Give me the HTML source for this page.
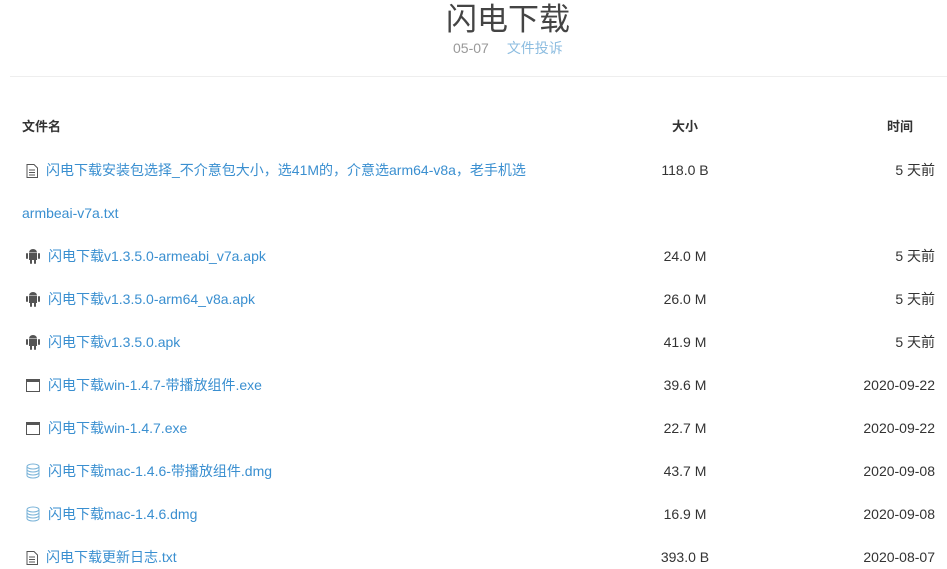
<!DOCTYPE html>
<html><head><meta charset="utf-8"><style>
body{margin:0;width:947px;height:569px;overflow:hidden;background:#fff;font-family:"Liberation Sans","Noto Sans CJK SC",sans-serif;font-size:14px;color:#333;position:relative}
.t{position:absolute;left:0;width:1016px;text-align:center;top:-6px;font-size:31px;color:#444}
.m{position:absolute;top:38px;left:453px;font-size:14px;color:#999}
.m span{color:#8dbde0;margin-left:18px}
.hr{position:absolute;top:76px;left:10px;right:0;border-top:1px solid #eee}
.r{position:absolute;left:0;width:947px;height:20px;line-height:20px}
.n{position:absolute;left:22px;color:#3a8fd0}
.n svg{vertical-align:-3px;margin-right:8px;margin-left:4px}
.s{position:absolute;left:640px;width:90px;text-align:center}
.d{position:absolute;right:12px;text-align:right}
.h{font-weight:bold;color:#333;font-size:13px}
</style></head><body>
<div class="t">闪电下载</div>
<div class="m">05-07<span>文件投诉</span></div>
<div class="hr"></div>
<div class="r h" style="top:117px"><span class="n" style="color:#333">文件名</span><span class="s">大小</span><span class="d" style="right:34px">时间</span></div>
<div class="r" style="top:160px"><span class="n"><svg width="12" height="14" viewBox="0 0 12 14"><path d="M1 .5h7l3.5 3.5v9.5H1z" fill="none" stroke="#555"/><path d="M3 6h6M3 8.5h6M3 11h6" stroke="#555"/></svg>闪电下载安装包选择_不介意包大小，选41M的，介意选arm64-v8a，老手机选</span><span class="s">118.0 B</span><span class="d">5 天前</span></div>
<div class="r" style="top:203px"><span class="n">armbeai-v7a.txt</span></div>
<div class="r" style="top:246px"><span class="n"><svg width="14" height="16" viewBox="0 0 14 16"><rect x="3" y="5" width="8" height="7" fill="#555"/><path d="M3 4.5a4 3.5 0 0 1 8 0z" fill="#555"/><rect x="0" y="5" width="2" height="6" rx="1" fill="#555"/><rect x="12" y="5" width="2" height="6" rx="1" fill="#555"/><rect x="4" y="11" width="2" height="5" rx="1" fill="#555"/><rect x="8" y="11" width="2" height="5" rx="1" fill="#555"/></svg>闪电下载v1.3.5.0-armeabi_v7a.apk</span><span class="s">24.0 M</span><span class="d">5 天前</span></div>
<div class="r" style="top:289px"><span class="n"><svg width="14" height="16" viewBox="0 0 14 16"><rect x="3" y="5" width="8" height="7" fill="#555"/><path d="M3 4.5a4 3.5 0 0 1 8 0z" fill="#555"/><rect x="0" y="5" width="2" height="6" rx="1" fill="#555"/><rect x="12" y="5" width="2" height="6" rx="1" fill="#555"/><rect x="4" y="11" width="2" height="5" rx="1" fill="#555"/><rect x="8" y="11" width="2" height="5" rx="1" fill="#555"/></svg>闪电下载v1.3.5.0-arm64_v8a.apk</span><span class="s">26.0 M</span><span class="d">5 天前</span></div>
<div class="r" style="top:332px"><span class="n"><svg width="14" height="16" viewBox="0 0 14 16"><rect x="3" y="5" width="8" height="7" fill="#555"/><path d="M3 4.5a4 3.5 0 0 1 8 0z" fill="#555"/><rect x="0" y="5" width="2" height="6" rx="1" fill="#555"/><rect x="12" y="5" width="2" height="6" rx="1" fill="#555"/><rect x="4" y="11" width="2" height="5" rx="1" fill="#555"/><rect x="8" y="11" width="2" height="5" rx="1" fill="#555"/></svg>闪电下载v1.3.5.0.apk</span><span class="s">41.9 M</span><span class="d">5 天前</span></div>
<div class="r" style="top:375px"><span class="n"><svg width="14" height="14" viewBox="0 0 14 14"><rect x=".5" y=".5" width="13" height="12" fill="none" stroke="#555"/><rect x="0" y="0" width="14" height="3" fill="#555"/></svg>闪电下载win-1.4.7-带播放组件.exe</span><span class="s">39.6 M</span><span class="d">2020-09-22</span></div>
<div class="r" style="top:418px"><span class="n"><svg width="14" height="14" viewBox="0 0 14 14"><rect x=".5" y=".5" width="13" height="12" fill="none" stroke="#555"/><rect x="0" y="0" width="14" height="3" fill="#555"/></svg>闪电下载win-1.4.7.exe</span><span class="s">22.7 M</span><span class="d">2020-09-22</span></div>
<div class="r" style="top:461px"><span class="n"><svg width="14" height="16" viewBox="0 0 14 16"><ellipse cx="7" cy="3.5" rx="6" ry="2.5" fill="none" stroke="#7ab3d8"/><path d="M1 3.5v9a6 2.5 0 0 0 12 0v-9M1 6.5a6 2.5 0 0 0 12 0M1 9.5a6 2.5 0 0 0 12 0" fill="none" stroke="#7ab3d8"/></svg>闪电下载mac-1.4.6-带播放组件.dmg</span><span class="s">43.7 M</span><span class="d">2020-09-08</span></div>
<div class="r" style="top:504px"><span class="n"><svg width="14" height="16" viewBox="0 0 14 16"><ellipse cx="7" cy="3.5" rx="6" ry="2.5" fill="none" stroke="#7ab3d8"/><path d="M1 3.5v9a6 2.5 0 0 0 12 0v-9M1 6.5a6 2.5 0 0 0 12 0M1 9.5a6 2.5 0 0 0 12 0" fill="none" stroke="#7ab3d8"/></svg>闪电下载mac-1.4.6.dmg</span><span class="s">16.9 M</span><span class="d">2020-09-08</span></div>
<div class="r" style="top:547px"><span class="n"><svg width="12" height="14" viewBox="0 0 12 14"><path d="M1 .5h7l3.5 3.5v9.5H1z" fill="none" stroke="#555"/><path d="M3 6h6M3 8.5h6M3 11h6" stroke="#555"/></svg>闪电下载更新日志.txt</span><span class="s">393.0 B</span><span class="d">2020-08-07</span></div>
</body></html>
